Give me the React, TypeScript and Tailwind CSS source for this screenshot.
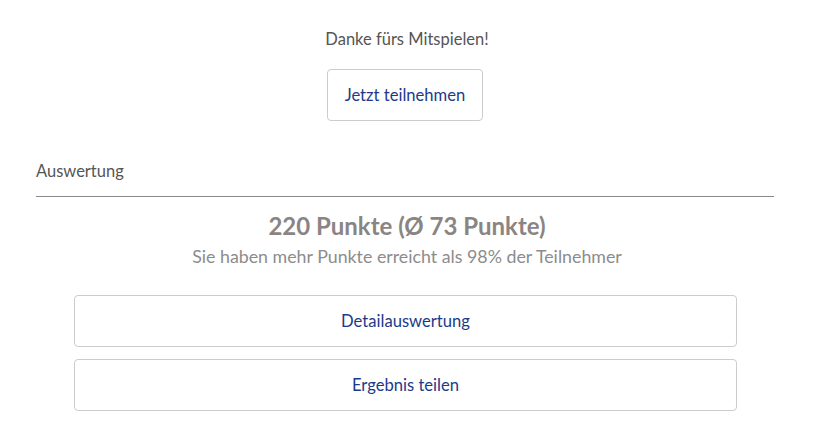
const App = () => {
  return (
    <div className="min-h-screen bg-white font-['Lato','Open_Sans',sans-serif]">
      <div className="flex flex-col items-center pt-[28px]">
        <p className="text-[16.5px] leading-[22px] text-[#555555]">Danke fürs Mitspielen!</p>
        <button className="mr-[4px] mt-[19px] h-[52px] w-[156px] rounded-[4px] border border-[#cccccc] bg-white text-[16.6px] text-[#1d3a8a]">
          Jetzt teilnehmen
        </button>
      </div>

      <div className="ml-9 mr-10 mt-[39px]">
        <h3 className="pb-[14px] text-[16.5px] leading-[22px] text-[#555555]">Auswertung</h3>
        <div className="h-px bg-[#8a8a8a]" />
      </div>

      <div className="mt-[14px] text-center">
        <h2 className="text-[24px] font-bold leading-[30px] text-[#8a8583]">220 Punkte (Ø 73 Punkte)</h2>
        <p className="mt-[3px] text-[17.8px] leading-[24px] text-[#8c8c8c]">
          Sie haben mehr Punkte erreicht als 98% der Teilnehmer
        </p>
      </div>

      <div className="ml-[74px] mr-[77px] mt-[27px] flex flex-col gap-[12px]">
        <button className="h-[52px] w-full rounded-[4px] border border-[#cccccc] bg-white text-[16.6px] text-[#1d3a8a]">
          Detailauswertung
        </button>
        <button className="h-[52px] w-full rounded-[4px] border border-[#cccccc] bg-white text-[16.6px] text-[#1d3a8a]">
          Ergebnis teilen
        </button>
      </div>
    </div>
  );
};

export default App;
